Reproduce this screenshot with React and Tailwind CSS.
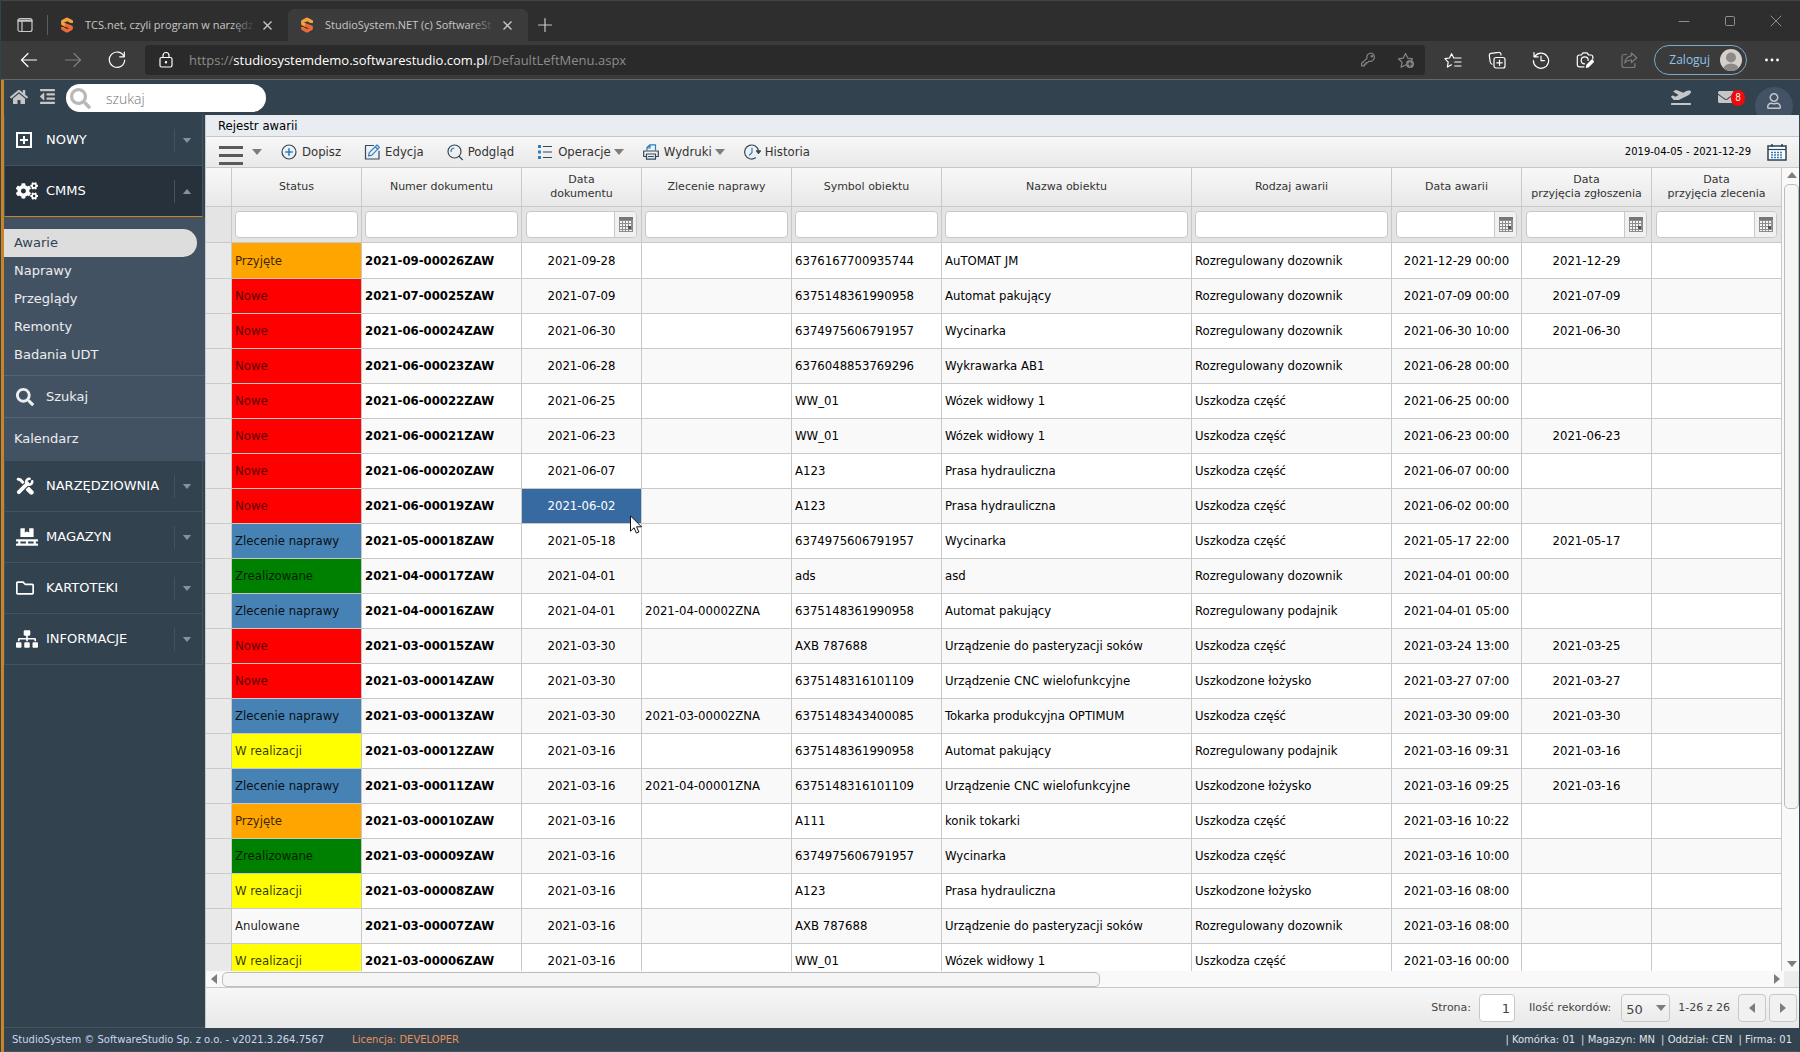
import clsx from 'clsx';
import {
  FaHome,
  FaOutdent,
  FaSearch,
  FaCogs,
  FaPallet,
  FaRegFolder,
  FaSitemap,
  FaPlaneDeparture,
  FaEnvelope,
  FaRegUser,
} from 'react-icons/fa';

const COLUMNS = [
  { key: 'status', label: ['Status'], col: 'w-[130px]' },
  { key: 'number', label: ['Numer dokumentu'], col: 'w-[160px]', bold: true },
  { key: 'docDate', label: ['Data', 'dokumentu'], col: 'w-[120px]', date: true },
  { key: 'order', label: ['Zlecenie naprawy'], col: 'w-[150px]' },
  { key: 'symbol', label: ['Symbol obiektu'], col: 'w-[150px]' },
  { key: 'name', label: ['Nazwa obiektu'], col: 'w-[250px]' },
  { key: 'kind', label: ['Rodzaj awarii'], col: 'w-[200px]' },
  { key: 'failDate', label: ['Data awarii'], col: 'w-[130px]', date: true },
  { key: 'reported', label: ['Data', 'przyjęcia zgłoszenia'], col: 'w-[130px]', date: true },
  { key: 'accepted', label: ['Data', 'przyjęcia zlecenia'], col: 'w-[130px]', date: true },
];

const STATUS_STYLES = {
  'Przyjęte': 'bg-[#ffa500] text-black/80',
  'Nowe': 'bg-[#ff0000] text-black/70',
  'Zlecenie naprawy': 'bg-[#4682b4] text-black/90',
  'Zrealizowane': 'bg-[#008000] text-black/80',
  'W realizacji': 'bg-[#ffff00] text-black/80',
  'Anulowane': 'text-black/90',
};

const ROWS = [
  ['Przyjęte', '2021-09-00026ZAW', '2021-09-28', '', '6376167700935744', 'AuTOMAT JM', 'Rozregulowany dozownik', '2021-12-29 00:00', '2021-12-29'],
  ['Nowe', '2021-07-00025ZAW', '2021-07-09', '', '6375148361990958', 'Automat pakujący', 'Rozregulowany dozownik', '2021-07-09 00:00', '2021-07-09'],
  ['Nowe', '2021-06-00024ZAW', '2021-06-30', '', '6374975606791957', 'Wycinarka', 'Rozregulowany dozownik', '2021-06-30 10:00', '2021-06-30'],
  ['Nowe', '2021-06-00023ZAW', '2021-06-28', '', '6376048853769296', 'Wykrawarka AB1', 'Rozregulowany dozownik', '2021-06-28 00:00', ''],
  ['Nowe', '2021-06-00022ZAW', '2021-06-25', '', 'WW_01', 'Wózek widłowy 1', 'Uszkodza część', '2021-06-25 00:00', ''],
  ['Nowe', '2021-06-00021ZAW', '2021-06-23', '', 'WW_01', 'Wózek widłowy 1', 'Uszkodza część', '2021-06-23 00:00', '2021-06-23'],
  ['Nowe', '2021-06-00020ZAW', '2021-06-07', '', 'A123', 'Prasa hydrauliczna', 'Uszkodza część', '2021-06-07 00:00', ''],
  ['Nowe', '2021-06-00019ZAW', '2021-06-02', '', 'A123', 'Prasa hydrauliczna', 'Uszkodza część', '2021-06-02 00:00', ''],
  ['Zlecenie naprawy', '2021-05-00018ZAW', '2021-05-18', '', '6374975606791957', 'Wycinarka', 'Uszkodza część', '2021-05-17 22:00', '2021-05-17'],
  ['Zrealizowane', '2021-04-00017ZAW', '2021-04-01', '', 'ads', 'asd', 'Rozregulowany dozownik', '2021-04-01 00:00', ''],
  ['Zlecenie naprawy', '2021-04-00016ZAW', '2021-04-01', '2021-04-00002ZNA', '6375148361990958', 'Automat pakujący', 'Rozregulowany podajnik', '2021-04-01 05:00', ''],
  ['Nowe', '2021-03-00015ZAW', '2021-03-30', '', 'AXB 787688', 'Urządzenie do pasteryzacji soków', 'Uszkodza część', '2021-03-24 13:00', '2021-03-25'],
  ['Nowe', '2021-03-00014ZAW', '2021-03-30', '', '6375148316101109', 'Urządzenie CNC wielofunkcyjne', 'Uszkodzone łożysko', '2021-03-27 07:00', '2021-03-27'],
  ['Zlecenie naprawy', '2021-03-00013ZAW', '2021-03-30', '2021-03-00002ZNA', '6375148343400085', 'Tokarka produkcyjna OPTIMUM', 'Uszkodza część', '2021-03-30 09:00', '2021-03-30'],
  ['W realizacji', '2021-03-00012ZAW', '2021-03-16', '', '6375148361990958', 'Automat pakujący', 'Rozregulowany podajnik', '2021-03-16 09:31', '2021-03-16'],
  ['Zlecenie naprawy', '2021-03-00011ZAW', '2021-03-16', '2021-04-00001ZNA', '6375148316101109', 'Urządzenie CNC wielofunkcyjne', 'Uszkodzone łożysko', '2021-03-16 09:25', '2021-03-16'],
  ['Przyjęte', '2021-03-00010ZAW', '2021-03-16', '', 'A111', 'konik tokarki', 'Uszkodza część', '2021-03-16 10:22', ''],
  ['Zrealizowane', '2021-03-00009ZAW', '2021-03-16', '', '6374975606791957', 'Wycinarka', 'Uszkodza część', '2021-03-16 10:00', ''],
  ['W realizacji', '2021-03-00008ZAW', '2021-03-16', '', 'A123', 'Prasa hydrauliczna', 'Uszkodzone łożysko', '2021-03-16 08:00', ''],
  ['Anulowane', '2021-03-00007ZAW', '2021-03-16', '', 'AXB 787688', 'Urządzenie do pasteryzacji soków', 'Rozregulowany dozownik', '2021-03-16 08:00', ''],
  ['W realizacji', '2021-03-00006ZAW', '2021-03-16', '', 'WW_01', 'Wózek widłowy 1', 'Uszkodza część', '2021-03-16 00:00', ''],
];

const SELECTED = { row: 7, col: 2 };

/* ---------- small drawings ---------- */

function Caret({ dir = 'down', className = 'w-2.5 h-1.5' }) {
  const points = {
    down: '0,0 10,0 5,6',
    up: '0,6 10,6 5,0',
    left: '6,0 6,10 0,5',
    right: '0,0 0,10 6,5',
  };
  const box = dir === 'down' || dir === 'up' ? '0 0 10 6' : '0 0 6 10';
  return (
    <svg viewBox={box} className={clsx('shrink-0', className)} fill="currentColor">
      <polygon points={points[dir]} />
    </svg>
  );
}

function Line({ children, className = 'w-[18px] h-[18px]', width = 1.2 }) {
  return (
    <svg
      viewBox="0 0 18 18"
      className={clsx('shrink-0', className)}
      fill="none"
      stroke="currentColor"
      strokeWidth={width}
      strokeLinecap="round"
      strokeLinejoin="round"
    >
      {children}
    </svg>
  );
}

function Logo() {
  return (
    <svg viewBox="0 0 12 16" className="w-3 h-4 shrink-0" fill="none" strokeWidth="3.4" strokeLinejoin="round">
      <path d="M10.3 6V4.6L6 2.2 1.8 4.6v2.2l2.6 1.4" stroke="#f6a23c" />
      <path d="M4 7.8l6.2 2.4v1.4L6 13.9l-4.3-2.4V10" stroke="#ec6a35" />
    </svg>
  );
}

function ToolsIcon() {
  return (
    <svg viewBox="0 0 18 18" className="w-[18px] h-[18px]" fill="none" stroke="currentColor" strokeLinecap="round">
      <path d="M2.2 2.2l2.400.8 4 4.200" strokeWidth="3" strokeLinejoin="round" />
      <path d="M12 12l3.400 3.400" strokeWidth="4.600" />
      <path d="M2.800 15.200L11.500 6.500" strokeWidth="6" stroke="#33424f" />
      <path d="M2.800 15.200L11.500 6.500" strokeWidth="3.800" />
      <path d="M13.600 1.800A3 3 0 1 0 16.200 4.400" strokeWidth="2.600" />
    </svg>
  );
}

function GridCalendarIcon() {
  return (
    <svg viewBox="0 0 14 15" className="w-3.5 h-[15px]">
      <path d="M0 0h14v15H0z" fill="#8c8c8c" />
      <path d="M0 0h14v3H0z" fill="#777" />
      <g fill="#f4f4f4">
        {[4, 7, 10].map((y) =>
          [1, 4, 7, 10].map((x) => <path key={`${x}-${y}`} d={`M${x} ${y}h2v2h-2z`} />)
        )}
        <path d="M1 13h2v1H1zM4 13h2v1H4zM7 13h2v1H7zM10 13h3v1h-3z" />
      </g>
      <path d="M9 9h3v3H9z" fill="#555" />
    </svg>
  );
}

/* ---------- browser chrome ---------- */

function BrowserTab({ title, active }) {
  return (
    <div
      className={clsx(
        'flex items-center w-[240px] h-8 self-end pl-[13px] pr-3 rounded-t-md text-[#c8c8c8]',
        active && 'bg-[#3b3b3b]'
      )}
    >
      <Logo />
      <span className="relative flex-1 min-w-0 ml-3 mr-1 whitespace-nowrap text-[11px] leading-4">
        {title}
        <span
          className={clsx(
            'absolute inset-y-0 right-0 w-6 bg-linear-to-r from-transparent',
            active ? 'to-[#3b3b3b]' : 'to-[#2e2e2e]'
          )}
        />
      </span>
      <button type="button" aria-label="Zamknij kartę" className="p-1">
        <svg viewBox="0 0 9 9" className="w-[9px] h-[9px]" stroke="currentColor" strokeWidth="1.4">
          <path d="M.5 .5l8 8M8.5 .5l-8 8" />
        </svg>
      </button>
    </div>
  );
}

function BrowserChrome() {
  return (
    <div className="shrink-0 font-['Open_Sans',sans-serif]">
      <div className="flex items-center h-[41px] bg-[#2e2e2e] border-t border-[#444] text-[#c8c8c8]">
        <button type="button" aria-label="Karty pionowe" className="ml-[15px] mt-2">
          <Line>
            <rect x="2" y="2.5" width="14" height="13" rx="2" />
            <path d="M2 5.2h14M2.2 4h13.6M6 5.5v10" />
          </Line>
        </button>
        <span className="w-px h-5 ml-[13px] mt-2 bg-[#5c5c5c]" />
        <BrowserTab title="TCS.net, czyli program w narzędz" />
        <BrowserTab title="StudioSystem.NET (c) SoftwareSt" active />
        <button type="button" aria-label="Nowa karta" className="ml-2 mt-2">
          <Line>
            <path d="M9 2.5v13M2.5 9h13" />
          </Line>
        </button>
        <div className="flex items-center gap-7 ml-auto mr-[15px] text-[#8f8f8f]">
          <button type="button" aria-label="Minimalizuj">
            <Line width={1}><path d="M4 9.5h10" /></Line>
          </button>
          <button type="button" aria-label="Maksymalizuj">
            <Line width={1}><rect x="4.5" y="4.5" width="9" height="9" rx="1" /></Line>
          </button>
          <button type="button" aria-label="Zamknij">
            <Line width={1}><path d="M4 4l10 10M14 4L4 14" /></Line>
          </button>
        </div>
      </div>

      <div className="flex items-center h-[39px] pl-[19px] pr-5 bg-[#3b3b3b] border-b border-[#666] text-white">
        <button type="button" aria-label="Wstecz">
          <Line><path d="M16.5 9H1.5M8 2.5L1.5 9 8 15.5" /></Line>
        </button>
        <button type="button" aria-label="Dalej" className="ml-[26px] text-[#808080]">
          <Line><path d="M1.5 9h15M10 2.5L16.5 9 10 15.5" /></Line>
        </button>
        <button type="button" aria-label="Odśwież" className="ml-[26px]">
          <Line><path d="M16 5.5A7.7 7.7 0 1 0 16.7 9M16.3 1.2v4.6h-4.6" /></Line>
        </button>

        <div className="flex items-center flex-1 h-[30px] ml-[19px] pl-3 pr-2.5 rounded bg-[#2a2a2a]">
          <Line>
            <rect x="3" y="6.5" width="12" height="9.5" rx="1.5" />
            <path d="M6 6.5V4.5a3 3 0 0 1 6 0v2" />
            <circle cx="9" cy="11.2" r=".6" fill="currentColor" />
          </Line>
          <span className="ml-3.5 text-[13px] leading-5 text-[#8c8c8c]">
            https://<span className="text-white">studiosystemdemo.softwarestudio.com.pl</span>/DefaultLeftMenu.aspx
          </span>
          <span className="flex items-center gap-5 ml-auto text-[#858585]">
            <Line>
              <path d="M11.6 2a4.2 4.2 0 1 1-1.6 8.2L8.6 11.6H7v1.6H5.4v1.6H2.6v-2.6L8 7.4A4.2 4.2 0 0 1 11.6 2z" />
              <circle cx="12.8" cy="5.2" r=".7" />
            </Line>
            <Line>
              <path d="M8.5 14l-4.4 2.3.9-5L1.4 7.8l4.9-.7L8.5 2.6l2.2 4.5 4.9.7-1.2 1.2" />
              <circle cx="13" cy="13" r="4" fill="currentColor" stroke="none" />
              <path d="M13 11v4M11 13h4" stroke="#2a2a2a" />
            </Line>
          </span>
        </div>

        <div className="flex items-center gap-[26px] ml-[19px]">
          <button type="button" aria-label="Ulubione">
            <Line>
              <path d="M7.4 13.8l-4 2.2.8-4.9L.9 7.7l4.6-.7 2.1-4.3L9.8 7H17M10.8 11H17M10.8 15H17" />
            </Line>
          </button>
          <button type="button" aria-label="Kolekcje">
            <Line>
              <rect x="6" y="6.5" width="11" height="10.5" rx="2" />
              <path d="M11.5 9v5.5M8.8 11.8h5.4M4 13.2A3 3 0 0 1 2.2 11L1.3 4.6a2 2 0 0 1 1.7-2.3l7.6-1a2 2 0 0 1 2.3 1.7l.1 1" />
            </Line>
          </button>
          <button type="button" aria-label="Historia przeglądania">
            <Line>
              <path d="M2.6 5.6A7.6 7.6 0 1 1 1.4 9.6M2 1.6v4.2h4.2M9 5v4.6h3.4" />
            </Line>
          </button>
          <button type="button" aria-label="Zrzut ekranu">
            <Line>
              <path d="M8 15.8H3.3a2 2 0 0 1-2-2V6a2 2 0 0 1 2-2h2L7 1.8h4L12.8 4h2a2 2 0 0 1 2 2v2" />
              <path d="M12.2 9.4a3.5 3.5 0 1 0-3.6 3.4" />
              <path d="M10.4 16.4l.6-2.4 5-5 1.6 1.6-5 5z" fill="currentColor" />
            </Line>
          </button>
          <button type="button" aria-label="Udostępnij" className="text-[#7c7c7c]">
            <Line>
              <path d="M6.5 3.5H4a2 2 0 0 0-2 2v9a2 2 0 0 0 2 2h9a2 2 0 0 0 2-2v-1.8" />
              <path d="M11.4 2l5.4 4.8-5.4 4.7V9c-3 0-5 .8-6.6 3 .4-4 2.6-6.6 6.6-7.2z" />
            </Line>
          </button>
        </div>

        <button
          type="button"
          className="flex items-center gap-2.5 h-[30px] ml-4 pl-3.5 pr-1 rounded-full border border-[#79a9cc] text-[12px] text-[#8fc3ea]"
        >
          Zaloguj
          <svg viewBox="0 0 22 22" className="w-[22px] h-[22px]">
            <clipPath id="avatar"><circle cx="11" cy="11" r="11" /></clipPath>
            <g clipPath="url(#avatar)">
              <rect width="22" height="22" fill="#d4d0cc" />
              <circle cx="11" cy="8.5" r="5" fill="#8e8a88" />
              <ellipse cx="11" cy="20" rx="7.5" ry="5.5" fill="#8e8a88" />
            </g>
          </svg>
        </button>
        <button type="button" aria-label="Więcej" className="ml-[17px]">
          <svg viewBox="0 0 16 4" className="w-4 h-1" fill="currentColor">
            <circle cx="2.5" cy="2" r="1.4" />
            <circle cx="8" cy="2" r="1.4" />
            <circle cx="13.5" cy="2" r="1.4" />
          </svg>
        </button>
      </div>
    </div>
  );
}

/* ---------- application ---------- */

function AppHeader() {
  return (
    <header className="flex items-start shrink-0 h-[35px] px-1.5 bg-[#33424f] text-[#c4c6c8] overflow-hidden">
      <button type="button" aria-label="Strona główna" className="mt-2">
        <FaHome className="w-[18px] h-[18px]" />
      </button>
      <button type="button" aria-label="Zwiń menu" className="mt-2 ml-3">
        <FaOutdent className="w-[15px] h-[17px]" />
      </button>
      <div className="flex items-center w-[200px] h-7 mt-1 ml-[11px] pl-1 rounded-full bg-white">
        <FaSearch className="w-[21px] h-[21px] text-[#b9b9b9]" />
        <input
          type="text"
          aria-label="szukaj"
          placeholder="szukaj"
          className="w-32 mt-0.5 ml-[15px] font-['Open_Sans',sans-serif] font-light text-[14px] leading-5 placeholder:text-[#777] focus:outline-none"
        />
      </div>
      <button type="button" aria-label="Urlopy" className="ml-auto mt-2">
        <FaPlaneDeparture className="w-5 h-[18px]" />
      </button>
      <button type="button" aria-label="Wiadomości" className="relative ml-[27px] mt-2">
        <FaEnvelope className="w-4 h-[18px]" />
        <span className="absolute -right-[11px] top-0.5 w-3.5 h-4 rounded-full bg-[#f00a0a] text-[10px] leading-4 text-center text-[#eee]">
          8
        </span>
      </button>
      <button
        type="button"
        aria-label="Użytkownik"
        className="flex justify-center shrink-0 w-[38px] h-[38px] ml-[21px] mt-[7px] pt-1.5 rounded-full bg-[#435264]"
      >
        <FaRegUser className="w-3.5 h-4" />
      </button>
    </header>
  );
}

function MenuItem({ icon, label, open }) {
  return (
    <div
      className={clsx(
        'flex items-center h-[51px] mr-0.5 pl-[11px] border-x border-b border-[#435360]',
        open ? 'bg-[#26313b] border-b-[#c98426]' : 'bg-[#33424f]'
      )}
    >
      <span className="w-[30px] text-white">{icon}</span>
      <a href="#" className="flex-1 text-white">{label}</a>
      <button
        type="button"
        aria-label={`Rozwiń ${label}`}
        className="flex items-center h-[23px] pl-[7px] pr-2.5 border-l border-[#435360] text-[#8b9095]"
      >
        <Caret dir={open ? 'up' : 'down'} className="w-2.5 h-[5px]" />
      </button>
    </div>
  );
}

function Sidebar() {
  return (
    <nav className="flex flex-col shrink-0 w-[201px] bg-[#33424f] border-b border-[#435360] font-['DejaVu_Sans',sans-serif] text-[13px] leading-5">
      <MenuItem
        label="NOWY"
        icon={
          <svg viewBox="0 0 16 16" className="w-4 h-4" fill="none" stroke="currentColor" strokeWidth="2">
            <path d="M1 1h14v14H1zM8 4v8M4 8h8" />
          </svg>
        }
      />
      <MenuItem label="CMMS" open icon={<FaCogs className="w-[22px] h-[18px]" />} />

      <div className="pt-3 bg-[#435262] text-white/90">
        <ul>
          <li className="flex items-center w-[193px] h-7 pl-2.5 rounded-r-full bg-[#dddddd]">
            <a href="#" className="text-[#33424f]">Awarie</a>
          </li>
          {['Naprawy', 'Przeglądy', 'Remonty', 'Badania UDT'].map((item) => (
            <li key={item} className="flex items-center h-7 pl-2.5">
              <a href="#">{item}</a>
            </li>
          ))}
        </ul>
        <a href="#" className="flex items-center h-[42px] mt-1.5 pl-3 border-t border-white/10">
          <FaSearch className="w-[18px] h-[18px] mr-3" />
          Szukaj
        </a>
        <a href="#" className="flex items-center h-[43px] pl-2.5 border-t border-white/10">
          Kalendarz
        </a>
      </div>

      <div className="border-t border-[#435360]">
        <MenuItem label="NARZĘDZIOWNIA" icon={<ToolsIcon />} />
        <MenuItem label="MAGAZYN" icon={<FaPallet className="w-[22px] h-[18px]" />} />
        <MenuItem label="KARTOTEKI" icon={<FaRegFolder className="w-[18px] h-[18px]" />} />
        <MenuItem label="INFORMACJE" icon={<FaSitemap className="w-[22px] h-[18px]" />} />
      </div>
    </nav>
  );
}

function ToolButton({ icon, label, menu }) {
  return (
    <button type="button" className={clsx('flex items-center text-[#333]', menu && '-mr-1')}>
      <span className="mr-1 text-[#33495c]">{icon}</span>
      {label}
      {menu && <Caret className="w-2.5 h-[6px] ml-[3px] text-[#7d7d7d]" />}
    </button>
  );
}

function Toolbar() {
  return (
    <div className="flex items-center shrink-0 h-[31px] pl-[13px] pr-3 border-b border-[#c9c9c9] bg-linear-to-b from-[#f7f7f7] to-[#e9e9e9]">
      <button type="button" aria-label="Menu" className="flex items-center gap-[9px] text-[#7d7d7d]">
        <span className="flex flex-col gap-[5px] pt-1.5">
          <span className="w-6 h-[3px] bg-[#5a5a5a]" />
          <span className="w-6 h-[3px] bg-[#5a5a5a]" />
          <span className="w-6 h-[3px] bg-[#5a5a5a]" />
        </span>
        <Caret className="w-2.5 h-[6px]" />
      </button>
      <div className="flex items-center gap-[22px] ml-[18px]">
        <ToolButton
          label="Dopisz"
          icon={
            <Line>
              <circle cx="9" cy="9" r="7" />
              <path d="M9 5.8v6.4M5.8 9h6.4" stroke="#2f7fc0" strokeWidth="1.6" />
            </Line>
          }
        />
        <ToolButton
          label="Edycja"
          icon={
            <Line>
              <path d="M10.5 2.5h-8V16H16V8" />
              <path d="M5.5 13l.8-3.4L14 2l2.4 2.4-7.5 7.7zM12.2 3.8l2.5 2.4" stroke="#2f7fc0" />
            </Line>
          }
        />
        <ToolButton
          label="Podgląd"
          icon={
            <Line>
              <circle cx="8.5" cy="8.5" r="6.5" />
              <path d="M13 13.3l3.5 3.4" />
              <path d="M5 8.5A3.6 3.6 0 0 1 8 5" stroke="#2f7fc0" />
            </Line>
          }
        />
        <ToolButton
          label="Operacje"
          menu
          icon={
            <svg viewBox="0 0 18 18" className="w-[18px] h-[18px]" fill="#2f7fc0">
              <path d="M2 2h3v3H2zM2 7.5h3v3H2zM2 13h3v3H2z" />
              <path d="M7 3.500h9M7 9h9M7 14.500h9" stroke="#33495c" strokeWidth="1.2" />
            </svg>
          }
        />
        <ToolButton
          label="Wydruki"
          menu
          icon={
            <Line>
              <path d="M5 7V4.5L8 1.8h5.500V7M8 2v3H5" stroke="#2f7fc0" />
              <path d="M4.5 13.500H1.700V8h14.600v5.500h-2.800" />
              <path d="M4.5 11h9v5.200h-9zM6.500 13.500h5" />
            </Line>
          }
        />
        <ToolButton
          label="Historia"
          icon={
            <Line>
              <path d="M12.500 14.800A7 7 0 1 1 15.500 8" />
              <path d="M13.500 7.800h4l-2 2.600z" fill="currentColor" />
              <path d="M9 5v4.500L6.500 12" stroke="#2f7fc0" />
            </Line>
          }
        />
      </div>
      <span className="ml-auto font-['DejaVu_Sans',sans-serif] text-[10px] text-black">
        2019-04-05 - 2021-12-29
      </span>
      <button type="button" aria-label="Zakres dat" className="ml-4">
        <svg viewBox="0 0 20 18" className="w-5 h-[18px]" fill="none">
          <path d="M1 3h18v14H1z" fill="#fff" stroke="#2b4255" strokeWidth="1.5" />
          <path d="M1 6.500h18" stroke="#2b4255" strokeWidth="1.2" />
          <path d="M5 1v3M15 1v3" stroke="#2b4255" strokeWidth="1.5" />
          <path d="M4 9.500h12M4 12h12M4 14.500h12" stroke="#2f7fc0" strokeWidth="1.5" strokeDasharray="2 1" />
        </svg>
      </button>
    </div>
  );
}

function FilterCell({ column }) {
  const name = column.label.join(' ');
  if (!column.date) {
    return (
      <input
        type="text"
        aria-label={name}
        className="block w-full h-[27px] px-1 rounded-[4px] border border-[#c8c8c8] bg-white focus:outline-none"
      />
    );
  }
  return (
    <div className="flex h-[27px] mx-px rounded-[4px] border border-[#c8c8c8] bg-white overflow-hidden">
      <input type="text" aria-label={name} className="flex-1 min-w-0 px-1 focus:outline-none" />
      <button
        type="button"
        aria-label={`${name} - kalendarz`}
        className="flex items-center justify-center w-[22px] border-l border-[#c8c8c8] bg-[#f1f1f1]"
      >
        <GridCalendarIcon />
      </button>
    </div>
  );
}

function Cursor() {
  return (
    <svg viewBox="0 0 12 19" className="absolute -right-px top-[26px] z-10 w-3 h-[19px]">
      <path d="M.5.8v15.4l3.600-3.400 2.300 5.300 2.500-1.100-2.300-5.200h4.900z" fill="#fff" stroke="#111" />
    </svg>
  );
}

function DataTable() {
  return (
    <table className="table-fixed w-[1576px] border-separate border-spacing-0 text-black">
      <colgroup>
        <col className="w-[26px]" />
        {COLUMNS.map((c) => (
          <col key={c.key} className={c.col} />
        ))}
      </colgroup>
      <thead>
        <tr className="h-[39px] font-['DejaVu_Sans',sans-serif] text-[11px] leading-[14px] text-[#333]">
          <th className="border-r border-b border-[#c9c9c9] bg-linear-to-b from-[#f8f8f8] to-[#e8e8e8]" />
          {COLUMNS.map((c) => (
            <th
              key={c.key}
              className="p-0 border-r border-b border-[#c9c9c9] bg-linear-to-b from-[#f8f8f8] to-[#e8e8e8] font-normal text-center"
            >
              {c.label.map((line) => (
                <div key={line}>{line}</div>
              ))}
            </th>
          ))}
        </tr>
        <tr className="h-9 bg-[#e4e4e4]">
          <td className="border-r border-b border-[#c9c9c9]" />
          {COLUMNS.map((c) => (
            <td key={c.key} className="px-[3px] py-0 border-r border-b border-[#c9c9c9]">
              <FilterCell column={c} />
            </td>
          ))}
        </tr>
      </thead>
      <tbody>
        {ROWS.map((row, r) => (
          <tr key={row[1]} className="h-[35px] first:h-9 bg-white even:bg-[#f9f9f9]">
            <td className="border-r border-b border-[#c9c9c9] bg-[#e9e9e9]" />
            {COLUMNS.map((c, i) => {
              const selected = SELECTED.row === r && SELECTED.col === i;
              return (
                <td
                  key={c.key}
                  className={clsx(
                    'relative px-[3px] py-0 border-r border-b border-[#c9c9c9] whitespace-nowrap',
                    c.bold && 'font-bold',
                    c.date && 'text-center',
                    i === 0 && STATUS_STYLES[row[0]],
                    selected && 'bg-[#366aa0] text-white'
                  )}
                >
                  {row[i]}
                  {selected && <Cursor />}
                </td>
              );
            })}
          </tr>
        ))}
      </tbody>
    </table>
  );
}

function Pager() {
  const frame = 'h-7 rounded-[4px] border border-[#c8c8c8]';
  return (
    <div className="flex items-center shrink-0 h-[41px] pr-0.5 border-t border-[#c9c9c9] bg-linear-to-b from-[#f7f7f7] to-[#e8e8e8] font-['DejaVu_Sans',sans-serif] text-[11px] text-[#444]">
      <label htmlFor="page" className="ml-auto mr-2">Strona:</label>
      <input
        id="page"
        type="text"
        defaultValue="1"
        className={clsx(frame, 'w-9 px-1 bg-white text-right text-[13px]')}
      />
      <label htmlFor="page-size" className="ml-3.5 mr-2.5">Ilość rekordów:</label>
      <div className="relative flex items-center">
        <select
          id="page-size"
          defaultValue="50"
          className={clsx(frame, 'w-[49px] pl-1 pt-1 appearance-none bg-linear-to-b from-[#f7f7f7] to-[#ebebeb] text-[13px]')}
        >
          <option>20</option>
          <option>50</option>
          <option>100</option>
        </select>
        <Caret className="absolute right-1 w-2.5 h-[6px] text-[#7d7d7d] pointer-events-none" />
      </div>
      <span className="mx-2">1-26 z 26</span>
      <button type="button" aria-label="Poprzednia strona" className={clsx(frame, 'flex items-center justify-center w-7 bg-[#f1f1f1] text-[#7d7d7d]')}>
        <Caret dir="left" className="w-[6px] h-2.5" />
      </button>
      <button type="button" aria-label="Następna strona" className={clsx(frame, 'flex items-center justify-center w-7 ml-[3px] bg-[#f1f1f1] text-[#7d7d7d]')}>
        <Caret dir="right" className="w-[6px] h-2.5" />
      </button>
    </div>
  );
}

function Register() {
  return (
    <main className="flex flex-col flex-1 min-w-0 border-l border-[#c9c9c9] bg-[#f9f9f9]">
      <h1 className="shrink-0 h-[22px] pl-3 border-b border-[#c4c6c9] bg-[#e9edf2] leading-[21px] text-black">
        Rejestr awarii
      </h1>
      <Toolbar />
      <div className="flex flex-1 min-h-0">
        <div className="flex-1 min-w-0 overflow-hidden">
          <DataTable />
        </div>
        {/* vertical scroll bar */}
        <div className="flex flex-col items-center shrink-0 w-[15px] text-[#7d7d7d]">
          <Caret dir="up" className="w-2.5 h-[6px] my-1" />
          <div className="w-full flex-1 py-0.5">
            <div className="w-full h-[81%] rounded-[5px] border border-[#bdbdbd] bg-[#f5f5f5]" />
          </div>
          <Caret dir="down" className="w-2.5 h-[6px] my-1" />
        </div>
      </div>
      {/* horizontal scroll bar */}
      <div className="flex items-center shrink-0 h-4 text-[#7d7d7d]">
        <Caret dir="left" className="w-[6px] h-2.5 mx-[5px]" />
        <div className="flex-1 h-[15px]">
          <div className="w-[56.7%] h-full rounded-[5px] border border-[#bdbdbd] bg-[#f5f5f5]" />
        </div>
        <Caret dir="right" className="w-[6px] h-2.5 mx-1" />
        <span className="w-[15px] h-full bg-[#ececec]" />
      </div>
      <Pager />
    </main>
  );
}

function Footer() {
  const info = ['Komórka: 01', 'Magazyn: MN', 'Oddział: CEN', 'Firma: 01'];
  return (
    <footer className="flex items-center shrink-0 h-6 pl-2 pr-[7px] bg-[#33424f] border-b border-[#435360] font-['DejaVu_Sans',sans-serif] text-[10px] text-[#c9d7ee]">
      <span>StudioSystem © SoftwareStudio Sp. z o.o. - v2021.3.264.7567</span>
      <span className="ml-7 text-[#e8935a]">Licencja: DEVELOPER</span>
      <span className="flex gap-1.5 ml-auto text-[#dfe3e8]">
        {info.map((item) => (
          <span key={item}>| {item}</span>
        ))}
      </span>
    </footer>
  );
}

export default function App() {
  return (
    <div className="flex flex-col h-screen border-l border-[#33424f] overflow-hidden font-['DejaVu_Sans_Condensed','DejaVu_Sans',sans-serif] text-[13px] leading-5">
      <BrowserChrome />
      <div className="flex flex-col flex-1 min-h-0 border-l-[3px] border-r border-l-[#c98426] border-r-[#33424f]">
        <AppHeader />
        <div className="flex flex-1 min-h-0">
          <Sidebar />
          <Register />
        </div>
        <Footer />
      </div>
    </div>
  );
}
